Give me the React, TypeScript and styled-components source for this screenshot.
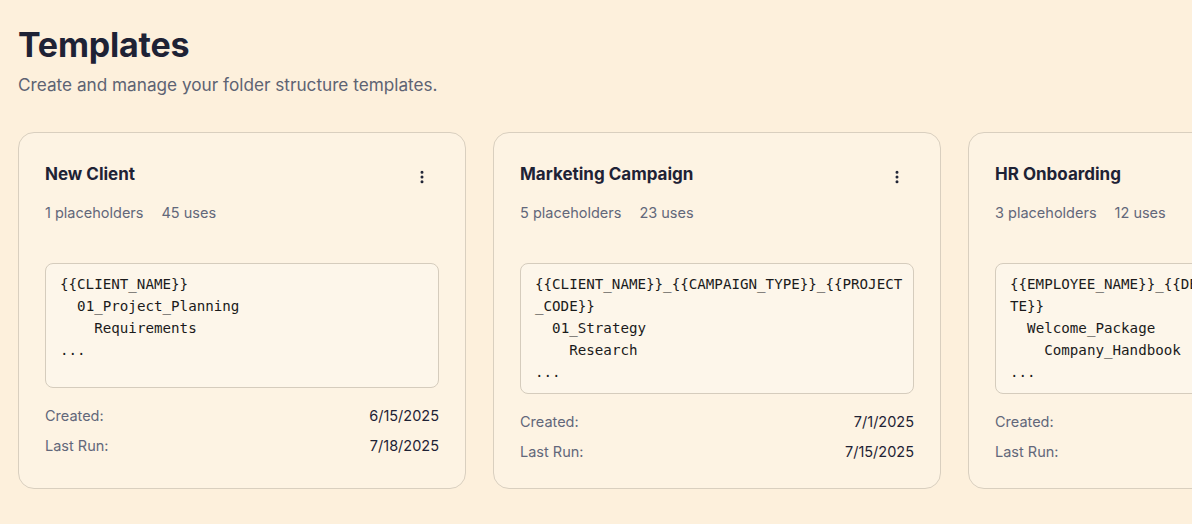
import React from 'react'
import styled, { createGlobalStyle } from 'styled-components'
import { EllipsisVertical } from 'lucide-react'

const GlobalStyle = createGlobalStyle`
  html, body {
    margin: 0;
    padding: 0;
    background: #fdf0dc;
    overflow: hidden;
  }
  body {
    font-family: Inter, "Noto Sans", sans-serif;
    color: #1e2235;
  }
`

const Page = styled.div`
  padding: 24px 18px 0;
  width: 1192px;
  height: 524px;
  box-sizing: border-box;
  overflow: hidden;
`

const Heading = styled.h1`
  margin: 0;
  font-size: 34px;
  line-height: 42px;
  font-weight: 700;
  letter-spacing: -0.2px;
  color: #1e2235;
`

const Subtitle = styled.p`
  margin: 7px 0 0;
  font-size: 17.2px;
  line-height: 24px;
  color: #5d6373;
`

const CardRow = styled.div`
  display: flex;
  gap: 27px;
  margin-top: 35px;
  align-items: stretch;
`

const Card = styled.div`
  flex: 0 0 448px;
  box-sizing: border-box;
  height: 357px;
  padding: 28px 26px 0;
  background: #fdf3e3;
  border: 1px solid #d9cfbf;
  border-radius: 16px;
`

const CardHead = styled.div`
  display: flex;
  justify-content: space-between;
  align-items: flex-start;
`

const CardTitle = styled.h3`
  margin: 0;
  font-size: 17px;
  line-height: 26px;
  font-weight: 650;
  color: #1e2235;
`

const MenuButton = styled.button`
  border: 0;
  background: none;
  padding: 0;
  margin: 8px 9px 0 0;
  color: #1e2235;
  display: flex;
  cursor: pointer;
`

const Meta = styled.div`
  display: flex;
  gap: 18px;
  margin-top: 15px;
  font-size: 14.5px;
  line-height: 22px;
  color: #62677a;
`

const CodeBox = styled.pre`
  margin: 39px 0 0;
  box-sizing: border-box;
  min-height: 125px;
  padding: 9px 10px 10px 14px;
  background: #fdf6ea;
  border: 1px solid #d5ccbd;
  border-radius: 8px;
  font-family: "DejaVu Sans Mono", "Liberation Mono", monospace;
  font-size: 14.2px;
  line-height: 22px;
  color: #1b1b1b;
  white-space: pre-wrap;
  word-break: break-all;
  overflow: hidden;
`

const Stats = styled.div`
  margin-top: 17px;
  display: flex;
  flex-direction: column;
  gap: 8px;
`

const StatRow = styled.div`
  display: flex;
  justify-content: space-between;
  font-size: 14.5px;
  line-height: 22px;
`

const StatLabel = styled.span`
  color: #62677a;
`

const StatValue = styled.span`
  color: #1e2235;
`

type Template = {
  name: string
  placeholders: number
  uses: number
  structure: string
  created: string
  lastRun: string
}

const templates: Template[] = [
  {
    name: 'New Client',
    placeholders: 1,
    uses: 45,
    structure: '{{CLIENT_NAME}}\n  01_Project_Planning\n    Requirements\n...',
    created: '6/15/2025',
    lastRun: '7/18/2025',
  },
  {
    name: 'Marketing Campaign',
    placeholders: 5,
    uses: 23,
    structure: '{{CLIENT_NAME}}_{{CAMPAIGN_TYPE}}_{{PROJECT_CODE}}\n  01_Strategy\n    Research\n...',
    created: '7/1/2025',
    lastRun: '7/15/2025',
  },
  {
    name: 'HR Onboarding',
    placeholders: 3,
    uses: 12,
    structure: '{{EMPLOYEE_NAME}}_{{DEPARTMENT}}_{{START_DATE}}\n  Welcome_Package\n    Company_Handbook\n...',
    created: '6/20/2025',
    lastRun: '7/10/2025',
  },
]

const TemplateCard = ({ t }: { t: Template }) => (
  <Card>
    <CardHead>
      <CardTitle>{t.name}</CardTitle>
      <MenuButton aria-label="More">
        <EllipsisVertical size={16} strokeWidth={2.5} />
      </MenuButton>
    </CardHead>
    <Meta>
      <span>{t.placeholders} placeholders</span>
      <span>{t.uses} uses</span>
    </Meta>
    <CodeBox>{t.structure}</CodeBox>
    <Stats>
      <StatRow>
        <StatLabel>Created:</StatLabel>
        <StatValue>{t.created}</StatValue>
      </StatRow>
      <StatRow>
        <StatLabel>Last Run:</StatLabel>
        <StatValue>{t.lastRun}</StatValue>
      </StatRow>
    </Stats>
  </Card>
)

export default function App() {
  return (
    <>
      <GlobalStyle />
      <Page>
        <Heading>Templates</Heading>
        <Subtitle>Create and manage your folder structure templates.</Subtitle>
        <CardRow>
          {templates.map((t) => (
            <TemplateCard key={t.name} t={t} />
          ))}
        </CardRow>
      </Page>
    </>
  )
}
